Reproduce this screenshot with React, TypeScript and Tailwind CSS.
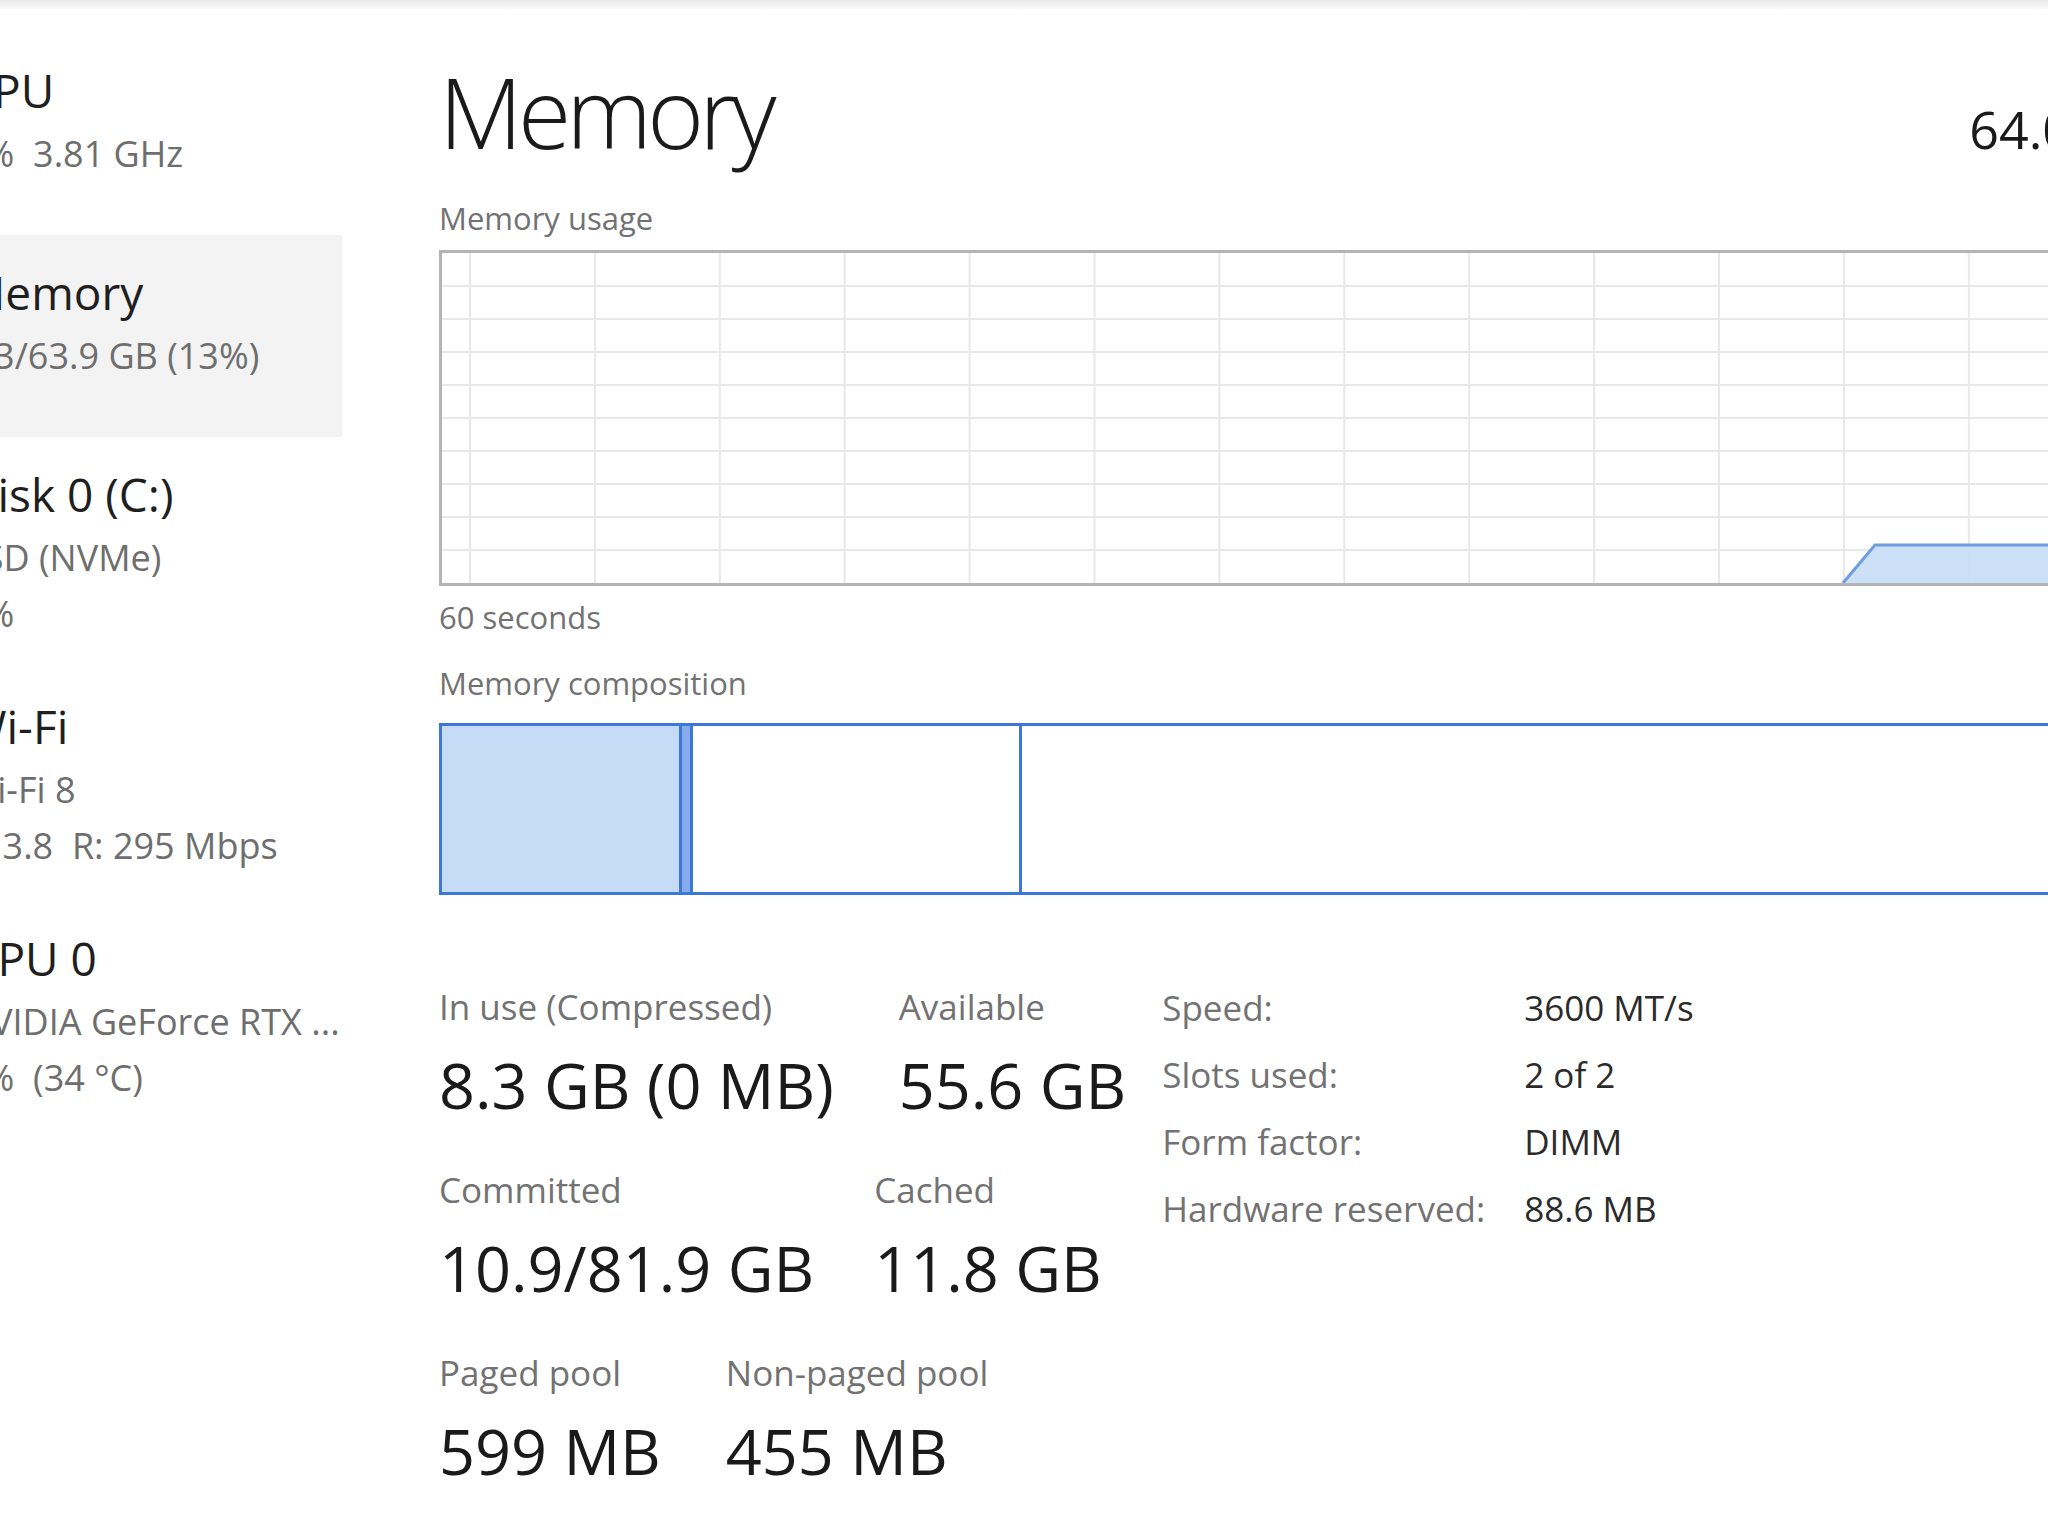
import React from 'react';

interface SideItem {
  title: string;
  lines: string[];
  selected?: boolean;
}

const sideItems: SideItem[] = [
  { title: 'CPU', lines: ['5%  3.81 GHz'] },
  { title: 'Memory', lines: ['8.3/63.9 GB (13%)'], selected: true },
  { title: 'Disk 0 (C:)', lines: ['SSD (NVMe)', '0%'] },
  { title: 'Wi-Fi', lines: ['Wi-Fi 8', 'S: 3.8  R: 295 Mbps'] },
  { title: 'GPU 0', lines: ['NVIDIA GeForce RTX ...', '1%  (34 °C)'] },
];

const hardware = [
  ['Speed:', '3600 MT/s'],
  ['Slots used:', '2 of 2'],
  ['Form factor:', 'DIMM'],
  ['Hardware reserved:', '88.6 MB'],
];

const GRAPH_W = 1712;
const GRAPH_H = 330;
const FILL_TOP = GRAPH_H - 38; // ~13% in use

// scrolling grid of the usage chart + the filled area
const UsageChart: React.FC = () => {
  const cols = Array.from({ length: 14 }, (_, i) => 28 + i * 124.9);
  const rows = Array.from({ length: 9 }, (_, i) => (i + 1) * (GRAPH_H / 10));
  return (
    <svg width={GRAPH_W} height={GRAPH_H} className="block">
      {cols.map((x) => (
        <line key={'c' + x} x1={x} y1={0} x2={x} y2={GRAPH_H} stroke="#e8e8e8" strokeWidth={2} />
      ))}
      {rows.map((y) => (
        <line key={'r' + y} x1={0} y1={y} x2={GRAPH_W} y2={y} stroke="#e8e8e8" strokeWidth={2} />
      ))}
      <polygon
        points={`1401,${GRAPH_H} 1433,${FILL_TOP} ${GRAPH_W},${FILL_TOP} ${GRAPH_W},${GRAPH_H}`}
        fill="#c8ddf6"
        fillOpacity={0.92}
      />
      <polyline
        points={`1401,${GRAPH_H} 1433,${FILL_TOP} ${GRAPH_W},${FILL_TOP}`}
        fill="none"
        stroke="#6e9de2"
        strokeWidth={3}
      />
    </svg>
  );
};

const Stat: React.FC<{ label: string; value: string }> = ({ label, value }) => (
  <div className="flex flex-col">
    <span className="text-[35px] leading-[44px] text-[#727272] whitespace-nowrap">{label}</span>
    <span className="mt-[20px] text-[63px] leading-[72px] text-[#1a1a1a] whitespace-nowrap">{value}</span>
  </div>
);

export default function App() {
  return (
    <div className="w-[2048px] h-[1536px] overflow-hidden bg-white font-['Open_Sans',sans-serif] flex flex-col">
      <div className="h-[9px] shrink-0 bg-gradient-to-b from-[#e9e9e9] to-[#fbfbfb]" />
      <div className="flex flex-1">
        {/* sidebar, scrolled so the thumbnails are off to the left */}
        <aside className="w-[342px] shrink-0 overflow-hidden pt-[24px]">
          {sideItems.map((item) => (
            <div
              key={item.title}
              className={
                'min-h-[202px] pt-[21px] pb-[27px] ' + (item.selected ? 'bg-[#f3f3f3]' : '')
              }
            >
              <div className="-ml-[36px] whitespace-pre">
                <div className="text-[46px] leading-[72px] text-[#1f1f1f]">{item.title}</div>
                {item.lines.map((l) => (
                  <div key={l} className="text-[36px] leading-[56px] text-[#6e6e6e]">
                    {l}
                  </div>
                ))}
              </div>
            </div>
          ))}
        </aside>

        <main className="ml-[97px] w-[1718px] shrink-0 pt-[54px]">
          <div className="flex items-baseline justify-between">
            <h1 className="text-[97px] leading-[97px] font-light tracking-[-0.05em] text-[#1a1a1a]">Memory</h1>
            <span className="text-[52px] text-[#1a1a1a]">64.0 GB</span>
          </div>

          <div className="mt-[30px] text-[31px] leading-[40px] text-[#727272]">Memory usage</div>
          <div className="mt-[12px] h-[336px] border-[3px] border-[#b4b4b4] overflow-hidden">
            <UsageChart />
          </div>
          <div className="mt-[11px] text-[31px] leading-[40px] text-[#727272]">60 seconds</div>

          <div className="mt-[26px] text-[31px] leading-[40px] text-[#727272]">Memory composition</div>
          <div className="mt-[20px] h-[172px] border-[3px] border-[#3b78d8] flex">
            <div className="w-[237px] bg-[#c6dcf6]" />
            <div className="w-[14px] bg-[#86aceb] border-x-[3px] border-[#3b78d8]" />
            <div className="w-[326px] bg-white" />
            <div className="flex-1 bg-white border-l-[3px] border-[#3b78d8]" />
          </div>

          <div className="mt-[79px] flex items-start">
            <div className="pt-[11px] flex flex-col gap-[47px]">
              <div className="flex gap-[65px]">
                <Stat label="In use (Compressed)" value="8.3 GB (0 MB)" />
                <Stat label="Available" value="55.6 GB" />
              </div>
              <div className="flex gap-[60px]">
                <Stat label="Committed" value="10.9/81.9 GB" />
                <Stat label="Cached" value="11.8 GB" />
              </div>
              <div className="flex gap-[65px]">
                <Stat label="Paged pool" value="599 MB" />
                <Stat label="Non-paged pool" value="455 MB" />
              </div>
            </div>

            <div className="ml-[36px] grid grid-cols-[362px_auto] text-[35px] leading-[67px]">
              {hardware.map(([k, v]) => (
                <React.Fragment key={k}>
                  <span className="text-[#727272] whitespace-nowrap">{k}</span>
                  <span className="text-[#2b2b2b] whitespace-nowrap">{v}</span>
                </React.Fragment>
              ))}
            </div>
          </div>
        </main>
      </div>
    </div>
  );
}
